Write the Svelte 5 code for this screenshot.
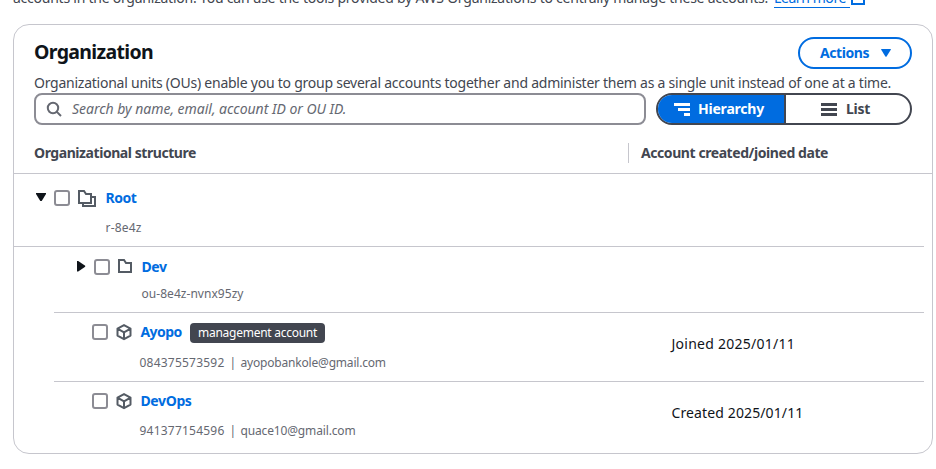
<script>
  const accounts = [
    {
      name: 'Ayopo', number: '084375573592', email: 'ayopobankole@gmail.com',
      badge: 'management account', date: 'Joined 2025/01/11',
      nameSpacing: -0.6, emailSpacing: -0.19, dateSpacing: 0.26
    },
    {
      name: 'DevOps', number: '941377154596', email: 'quace10@gmail.com',
      badge: null, date: 'Created 2025/01/11',
      nameSpacing: -0.378, emailSpacing: -0.15, dateSpacing: 0.12
    }
  ];
</script>

<div class="page">
  <p class="intro">
    <span class="intro-text">accounts in the organization. You can use the tools provided by AWS Organizations to centrally manage these accounts.</span>
    <a class="learn" href="#learn">Learn more</a>
    <svg class="external" width="16" height="16" viewBox="0 0 16 16"><path d="M14 8v7H2V2h6" /></svg>
  </p>

  <section class="card">
    <header class="head">
      <h2>Organization</h2>
      <button class="actions">
        <span>Actions</span>
        <svg width="10" height="8" viewBox="0 0 10 8"><path d="M.6 0h8.8q.8 0 .4.7L5.6 7.4q-.6.9-1.2 0L.2.7Q-.2 0 .6 0z" fill="#006ce0" /></svg>
      </button>
    </header>
    <p class="desc">Organizational units (OUs) enable you to group several accounts together and administer them as a single unit instead of one at a time.</p>

    <div class="toolbar">
      <div class="search">
        <svg width="16" height="16" viewBox="0 0 16 16" fill="none" stroke="#656871" stroke-width="2"><circle cx="7" cy="7" r="5.2" /><path d="M10.6 10.6 15 15" /></svg>
        <span>Search by name, email, account ID or OU ID.</span>
      </div>
      <div class="segments">
        <div class="segment selected">
          <svg width="16" height="13" viewBox="0 0 16 13" fill="#fff"><path d="M0 0h16v3H0zM4 5h12v3H4zM10 10h6v3h-6z" /></svg>
          <span>Hierarchy</span>
        </div>
        <div class="segment">
          <svg width="16" height="13" viewBox="0 0 16 13" fill="#424650"><path d="M0 0h16v3H0zM0 5h16v3H0zM0 10h16v3H0z" /></svg>
          <span>List</span>
        </div>
      </div>
    </div>

    <div class="columns">
      <div class="first">Organizational structure</div>
      <div class="second">Account created/joined date</div>
    </div>

    <div class="row root">
      <div class="line">
        <svg class="caret" width="10" height="8" viewBox="0 0 10 8"><path d="M0 0h10v1L5.7 8H4.3L0 1z" fill="#0f141a" /></svg>
        <span class="check"></span>
        <svg class="folders" width="18" height="17" viewBox="0 0 18 17" fill="none" stroke="#545b64" stroke-width="2"><path d="M1 13V1h5l2 3h5v9zM14 7h3v9H5v-3" /></svg>
        <a class="name" href="#root">Root</a>
      </div>
      <div class="sub root-id">r-8e4z</div>
    </div>

    <div class="row unit">
      <div class="line">
        <svg class="caret" width="9" height="11" viewBox="0 0 9 11"><path d="M0 0h1.2L8.2 4.8v.9L1.2 10.5H0z" fill="#0f141a" /></svg>
        <span class="check"></span>
        <svg class="folder" width="14" height="14" viewBox="0 0 14 14" fill="none" stroke="#545b64" stroke-width="2"><path d="M1 13V1h5l2 3h5v9z" /></svg>
        <a class="name" href="#dev">Dev</a>
      </div>
      <div class="sub unit-id">ou-8e4z-nvnx95zy</div>
    </div>

    {#each accounts as account}
      <div class="row account">
        <div class="details">
          <div class="line">
            <span class="check"></span>
            <svg class="cube" width="16" height="18" viewBox="0 0 16 18" fill="none" stroke="#545b64" stroke-width="2" stroke-linejoin="round"><path d="M8 2.1 14.5 5.6v7L8 16.2 1.5 12.6v-7zM1.5 5.7 8 9.3l6.5-3.6M8 9.3v6.8" /></svg>
            <a class="name" href="#account" style:letter-spacing="{account.nameSpacing}px">{account.name}</a>
            {#if account.badge}<span class="badge">{account.badge}</span>{/if}
          </div>
          <div class="sub">
            <span class="number">{account.number}</span>
            <span class="pipe">|</span>
            <span style:letter-spacing="{account.emailSpacing}px">{account.email}</span>
          </div>
        </div>
        <div class="date" style:letter-spacing="{account.dateSpacing}px">{account.date}</div>
      </div>
    {/each}
  </section>
</div>

<style>
  :global(body) { background: #fff; }
  .page {
    box-sizing: border-box;
    width: 936px;
    height: 469px;
    overflow: hidden;
    padding: 0 3px 0 13px;
    font: 14px/20px "Noto Sans", "Open Sans", sans-serif;
    color: #424650;
    white-space: nowrap;
  }
  p, h2 { margin: 0; }
  a { color: #006ce0; text-decoration: none; }
  svg { display: block; flex: none; }

  .intro { display: flex; height: 20px; margin-top: -12px; }
  .intro-text { width: 761px; letter-spacing: -0.242px; }
  .learn { box-sizing: border-box; width: 76px; height: 20px; border-bottom: 1px solid #006ce0; letter-spacing: -0.412px; }
  .external { margin: 1px 0 0; fill: none; stroke: #006ce0; stroke-width: 2; }

  .card {
    box-sizing: border-box;
    width: 920px;
    height: 430px;
    margin-top: 16px;
    border: 1px solid #c6c6cd;
    border-radius: 16px;
  }
  .head { display: flex; justify-content: space-between; padding: 12px 20px 0; height: 36px; }
  h2 { margin-top: 3px; font-size: 19.5px; line-height: 24px; letter-spacing: -0.66px; color: #0f141a; }
  .actions {
    display: flex;
    align-items: center;
    justify-content: space-between;
    box-sizing: border-box;
    width: 114px;
    height: 32px;
    padding: 0 19px 0 20px;
    border: 2px solid #006ce0;
    border-radius: 16px;
    background: #fff;
    color: #006ce0;
    font: bold 14px/20px "Noto Sans", sans-serif;
    letter-spacing: -0.436px;
  }
  .desc { padding-left: 20px; letter-spacing: -0.242px; }

  .toolbar { display: flex; gap: 10px; padding-left: 20px; }
  .search {
    display: flex;
    align-items: center;
    gap: 10px;
    box-sizing: border-box;
    width: 612px;
    height: 32px;
    padding-left: 10px;
    border: 2px solid #8c8c94;
    border-radius: 8px;
    color: #656871;
    font-style: italic;
    letter-spacing: -0.02px;
  }
  .segments {
    display: flex;
    box-sizing: border-box;
    width: 256px;
    height: 32px;
    border: 2px solid #424650;
    border-radius: 16px;
    overflow: hidden;
    font-weight: 700;
  }
  .segment { display: flex; flex: 1; align-items: center; gap: 9px; padding-left: 35px; letter-spacing: -0.279px; }
  .segment.selected {
    box-sizing: border-box;
    flex: none;
    gap: 8px;
    width: 128px;
    padding-left: 16px;
    border-right: 2px solid #424650;
    background: #006ce0;
    color: #fff;
    letter-spacing: -0.213px;
  }

  .columns {
    display: flex;
    align-items: center;
    box-sizing: border-box;
    height: 49px;
    padding-top: 7px;
    border-bottom: 1px solid #c6c6cd;
    font-weight: 700;
  }
  .first { width: 594px; padding-left: 20px; letter-spacing: -0.438px; }
  .second { padding: 0 0 0 12px; border-left: 1px solid #c6c6cd; letter-spacing: -0.428px; }

  .row { box-sizing: border-box; width: 910px; }
  .line { display: flex; align-items: center; height: 20px; }
  .check { box-sizing: border-box; flex: none; width: 16px; height: 16px; border: 2px solid #8c8c94; border-radius: 3px; }
  .name { font-weight: 700; letter-spacing: -0.44px; }
  .sub { font-size: 12px; line-height: 16px; color: #656871; }

  .root { height: 73px; padding: 14px 0 0 22px; border-bottom: 1px solid #c6c6cd; }
  .root .caret { margin-bottom: 2px; }
  .root .check { margin-left: 8px; }
  .folders { margin: 1px 9.5px 0 8px; }
  .root-id { margin: 12px 0 0 69.5px; letter-spacing: 0.174px; }

  .unit { width: 870px; height: 66px; margin-left: 40px; padding: 10px 0 0 23px; border-bottom: 1px solid #c6c6cd; }
  .unit .caret { margin-bottom: 1px; }
  .unit .check { margin-left: 8px; }
  .folder { margin: 0 9.5px 2px 8px; }
  .unit-id { margin: 9px 0 0 64.5px; letter-spacing: 0.043px; }

  .account { display: flex; width: 870px; height: 69px; margin-left: 40px; padding: 9px 0 0 38px; border-bottom: 1px solid #c6c6cd; }
  .account:last-child { border-bottom: 0; }
  .details { width: 579.5px; }
  .cube { margin: 0 9px 0 7.5px; }
  .account .sub { display: flex; margin: 13px 0 0 47.5px; }
  .account:last-child .sub { margin-top: 12px; }
  .number { width: 90px; letter-spacing: 0.219px; }
  .pipe { width: 11px; }
  .badge { margin: 2px 0 0 8.5px; padding: 0 8px; border-radius: 4px; background: #424650; color: #fff; font-size: 12px; letter-spacing: -0.266px; }
  .date { margin-top: 12px; color: #0f141a; }
</style>
